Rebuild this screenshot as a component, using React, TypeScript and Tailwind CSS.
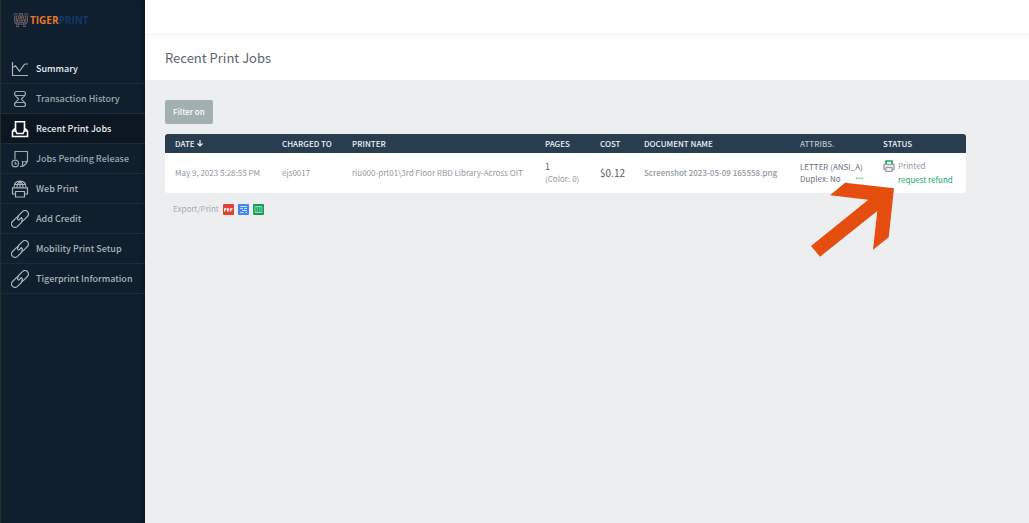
import React from "react";

const Svg: React.FC<{ children: React.ReactNode }> = ({ children }) => (
  <svg
    viewBox="0 0 18 18"
    className="size-[18px] shrink-0"
    fill="none"
    stroke="currentColor"
    strokeWidth="1.2"
    aria-hidden="true"
  >
    {children}
  </svg>
);

const ChartIcon = () => (
  <Svg>
    <path d="M1.5 2v13.500H17" />
    <path d="M1.500 7.500l3-1.700 4 5.500 4.500-6.500q.7-.8 1.500-.8H17" />
  </Svg>
);

const HourglassIcon = () => (
  <Svg>
    <rect x="3.500" y="1.500" width="11" height="4" rx="2" />
    <path d="M4 5c.3 2 3.500 2.700 3.500 4S4 11.300 3.600 14M14 5c-.3 2-3.500 2.700-3.500 4s3.500 2.300 3.900 5" />
    <rect x="3.500" y="12.500" width="11" height="4" rx="2" />
  </Svg>
);

const TrayIcon = () => (
  <Svg>
    <path strokeWidth="1.6" d="M4.500 11V1.800h9V11M4.500 8L1.500 11v5.500h15V11L13.500 8" />
    <path strokeWidth="1.6" d="M1.500 11h3.300L6 13.500h6l1.200-2.500h3.300" />
  </Svg>
);

const PendingIcon = () => (
  <Svg>
    <path d="M4 9V1.500h12.500v9.500q-1.500 4-5.500 5.500H9M11 16.500q1.200-2 .5-5 2.500.7 5-.5" />
    <circle cx="4.200" cy="13.500" r="3.300" />
    <path d="M4.200 11.800v2H5.800" />
  </Svg>
);

const WebPrintIcon = () => (
  <Svg>
    <path d="M3 7.500C3 3.500 5.500 1.200 9 1.200s6 2.300 6 6.300M9 1.200v6.300M6 7.500C6 4.500 7 2.500 9 1.200c2 1.300 3 3.300 3 6.300M4 4.500h10" />
    <path d="M4.500 14h-3V7.800h15V14h-3M4.500 11.500h9V17h-9z" />
  </Svg>
);

const LinkIcon = () => (
  <Svg>
    <g transform="rotate(-45 9 9)" strokeWidth="1.2">
      <path d="M9.800 6.800Q9 5.500 7.500 5.500H2a3.500 3.500 0 0 0 0 7h5.500A3.500 3.500 0 0 0 11 9H7" />
      <path d="M8.200 11.200q.8 1.300 2.300 1.300H16a3.500 3.500 0 0 0 0-7h-5.500A3.500 3.500 0 0 0 7 9" />
    </g>
  </Svg>
);

const navItems = [
  { label: "Summary", icon: <ChartIcon />, style: "text-[#a9b3b9]", text: "text-[#e8edf0]" },
  { label: "Transaction History", icon: <HourglassIcon />, style: "text-[#9da8b0]", text: "" },
  { label: "Recent Print Jobs", icon: <TrayIcon />, style: "bg-[#0b1620] text-white", text: "text-[#e8edf0]" },
  { label: "Jobs Pending Release", icon: <PendingIcon />, style: "text-[#9da8b0]", text: "" },
  { label: "Web Print", icon: <WebPrintIcon />, style: "text-[#a9b3b9]", text: "" },
  { label: "Add Credit", icon: <LinkIcon />, style: "text-[#a9b3b9]", text: "" },
  { label: "Mobility Print Setup", icon: <LinkIcon />, style: "text-[#a9b3b9]", text: "" },
  { label: "Tigerprint Information", icon: <LinkIcon />, style: "text-[#a9b3b9]", text: "" },
];

const Logo = () => (
  <a href="#" className="flex items-center gap-[1px] pl-3 text-[10px] leading-[14px] font-bold">
    <svg viewBox="0 0 16 14" className="h-[14px] w-4" fill="none" aria-hidden="true">
      <path d="M.8 2h4M11.200 2h4M2.500 2v5.500q0 2.500 2.500 2.500h6q2.500 0 2.500-2.500V2" stroke="#a65f3a" strokeWidth="3" />
      <path d="M.8 2h4M11.200 2h4M2.500 2v5.500q0 2.500 2.500 2.500h6q2.500 0 2.500-2.500V2" stroke="#173a67" strokeWidth="1.800" />
      <path d="M3 12.500h3M10 12.500h3M4.300 12L7.300 1.500h1.400L11.700 12M5.500 8.500h5" stroke="#c8703a" strokeWidth="2.600" />
      <path d="M3 12.500h3M10 12.500h3M4.300 12L7.300 1.500h1.400L11.700 12M5.500 8.500h5" stroke="#173a67" strokeWidth="1.400" />
    </svg>
    <span className="font-['Open_Sans',sans-serif]">
      <span className="text-[#e2762b]">TIGER</span>
      <span className="text-[#0d386b]">PRINT</span>
    </span>
  </a>
);

const Sidebar = () => (
  <aside className="w-[145px] shrink-0 border-l border-[#2b2b2b] bg-[#0f1f2d] shadow-[inset_-6px_0_5px_-4px_#0a1622]">
    <div className="h-[54px] pt-[13px]">
      <Logo />
    </div>
    <nav>
      {navItems.map((item) => (
        <a
          key={item.label}
          href="#"
          className={`flex h-[30px] items-center gap-[7px] border-b border-[#1a2b39] pl-[10px] text-[9px] font-medium whitespace-nowrap ${item.style}`}
        >
          {item.icon}
          <span className={item.text}>{item.label}</span>
        </a>
      ))}
    </nav>
  </aside>
);

const PrinterIcon = () => (
  <svg viewBox="0 0 12 12" className="h-3 w-3 shrink-0" fill="none" strokeWidth="1.300" aria-hidden="true">
    <path d="M3 9.500H1V4.500h10v5H9" stroke="#9a9fa3" />
    <path d="M3 7.500h6v4H3z" stroke="#9a9fa3" />
    <path d="M3 4V1h6v3" stroke="#1fa463" strokeWidth="1.600" />
  </svg>
);

const Arrow = () => (
  <svg
    viewBox="811 182 84 76"
    className="pointer-events-none absolute top-[29px] right-[71px] h-[76px] w-[84px]"
    aria-hidden="true"
  >
    <path
      fill="#e64e10"
      d="M845 182.700L894 188.300 888.700 237.300 873 249.700 877.300 211 820 256.700 811 246 868.300 199.700 830 195.300z"
    />
  </svg>
);

const th = "pl-[10px] text-left font-medium";
const td = "pl-[10px] align-middle";

const JobsTable = () => (
  <table className="w-full table-fixed border-separate border-spacing-0 text-[8px] leading-3 whitespace-nowrap">
    <colgroup>
      <col className="w-[107px]" />
      <col className="w-[70px]" />
      <col className="w-[193px]" />
      <col className="w-[55px]" />
      <col className="w-[44px]" />
      <col className="w-[156px]" />
      <col className="w-[83px]" />
      <col />
    </colgroup>
    <thead className="text-[#eef1f3]">
      <tr className="h-[19px] bg-[#293d51]">
        <th className={`${th} rounded-tl-[3px]`}>
          <span className="flex items-center gap-[2px]">
            DATE
            <svg viewBox="0 0 6 7" className="h-[7px] w-[6px]" fill="none" stroke="currentColor" aria-hidden="true">
              <path strokeWidth="1.200" d="M3 0v6M.5 3.500L3 6l2.500-2.500" />
            </svg>
          </span>
        </th>
        <th className={th}>CHARGED TO</th>
        <th className={th}>PRINTER</th>
        <th className={th}>PAGES</th>
        <th className={th}>COST</th>
        <th className={th}>DOCUMENT NAME</th>
        <th className={`${th} text-[#b9c1c8]`}>ATTRIBS.</th>
        <th className={`${th} rounded-tr-[3px]`}>STATUS</th>
      </tr>
    </thead>
    <tbody className="bg-white text-[#92989f]">
      <tr className="h-10">
        <td className={`${td} rounded-bl-[3px]`}>May 9, 2023 5:28:55 PM</td>
        <td className={td}>ejs0017</td>
        <td className={td}>riu000-prt01\3rd Floor RBD Library-Across OIT</td>
        <td className={td}>
          <div className="text-[9px] text-[#555f69]">1</div>
          <div>(Color: 0)</div>
        </td>
        <td className={`${td} text-[10px] text-[#555f69]`}>$0.12</td>
        <td className={`${td} font-medium`}>Screenshot 2023-05-09 165558.png</td>
        <td className={`${td} text-[#66707a]`}>
          <div>LETTER (ANSI_A)</div>
          <div className="flex items-start justify-between pr-[10px]">
            Duplex: No
            <a href="#" className="leading-[6px] font-bold text-[#1fb36b]">...</a>
          </div>
        </td>
        <td className={`${td} relative rounded-br-[3px]`}>
          <div className="flex items-center gap-[3px]">
            <PrinterIcon />
            Printed
          </div>
          <a href="#" className="mt-[2px] ml-[15px] block text-[#12a862]">request refund</a>
          <Arrow />
        </td>
      </tr>
    </tbody>
  </table>
);

const ExportLinks = () => (
  <div className="flex items-center gap-1 pt-[10px] pl-2 text-[8px] leading-3 text-[#a0acb0]">
    Export/Print
    <a href="#" aria-label="Export as PDF">
      <svg viewBox="0 0 11 11" className="size-[11px]">
        <rect width="11" height="11" rx="1" fill="#dc4437" />
        <path d="M1.500 7.500v-3H3v1.500H1.500M4.500 4.500v2.600h1.300V4.700H4.500M7.600 7.500v-3h1.900M7.600 6h1.500" fill="none" stroke="#fff" strokeWidth=".9" />
      </svg>
    </a>
    <a href="#" aria-label="Export as HTML">
      <svg viewBox="0 0 11 11" className="size-[11px]">
        <rect width="11" height="11" rx="1" fill="#4285f4" />
        <path d="M2 2.500h7M2 4.500h3M6 4.500h3M4 6.500h5M2 8.500h4M7.500 8.500H9" stroke="#dbe8ff" strokeWidth=".9" />
      </svg>
    </a>
    <a href="#" aria-label="Export as spreadsheet">
      <svg viewBox="0 0 11 11" className="size-[11px]">
        <rect width="11" height="11" rx="1" fill="#109d58" />
        <path d="M2 2.500h7v6H2zM4.200 2.500v6M6.800 2.500v6" fill="none" stroke="#b8e2cc" strokeWidth=".8" />
      </svg>
    </a>
  </div>
);

const App: React.FC = () => {
  return (
    <div className="flex min-h-screen bg-[#edeef0] font-['Noto_Sans_CJK_SC',sans-serif]">
      <Sidebar />
      <div className="min-w-0 flex-1">
        <header className="bg-white">
          <div className="h-[35px] border-b border-[#eeeff0]" />
          <h1 className="flex h-[45px] items-center px-5 text-[13px] text-[#5c6670]">
            Recent Print Jobs
          </h1>
        </header>
        <main className="p-5">
          <button
            type="button"
            className="mb-[10px] block h-6 rounded-[2px] bg-[#a2b0b1] px-2 text-[8px] font-medium text-white"
          >
            Filter on
          </button>
          <div className="max-w-[801px]">
            <JobsTable />
          </div>
          <ExportLinks />
        </main>
      </div>
    </div>
  );
};

export default App;
